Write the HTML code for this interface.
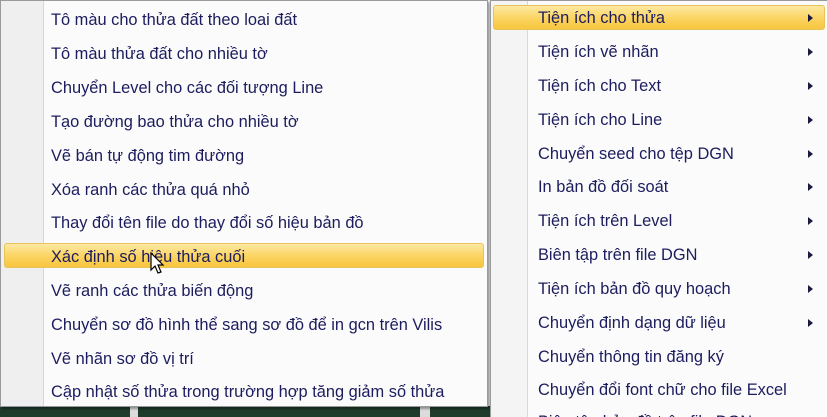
<!DOCTYPE html>
<html style="overflow:hidden;width:827px;height:417px"><head><meta charset="utf-8"><style>
*{margin:0;padding:0;box-sizing:border-box}
body{width:827px;height:417px;overflow:hidden;background:#f3f3f3;font-family:"Liberation Sans",sans-serif;position:relative}
.bg{position:absolute;left:0;top:406px;width:490px;height:11px;background:#1e3b2c}
.bg i{position:absolute;top:0;height:11px;background:#dcdcdc}
.menu{position:absolute;background:#fbfbfb;border:1px solid #9a9a9a;overflow:hidden}
.gut{position:absolute;top:0;bottom:0;background:#efefef;border-right:1px solid #d8d8d8}
.it{position:absolute;height:26px;line-height:26px;font-size:16.4px;color:#1c1c5e;white-space:nowrap}
.hl{position:absolute;height:25px;border:1px solid #e8c25a;border-radius:3px;background:linear-gradient(#fde9a4,#fbd35f 55%,#f8c63e)}
.arr{position:absolute;width:0;height:0;border-top:4px solid transparent;border-bottom:4px solid transparent;border-left:5px solid #1a1a40}
</style></head><body>
<div class="bg"><i style="left:130px;width:8px"></i><i style="left:420px;width:10px"></i></div>
<div class="menu" style="left:0;top:0;width:488px;height:407px;box-shadow:2px 2px 2px rgba(0,0,0,.35)">
<div class="gut" style="left:0;width:43px"></div>
<div class="hl" style="left:3px;top:242px;width:480px"></div>
<div class="it" style="left:50px;top:6px">Tô màu cho thửa đất theo loai đất</div>
<div class="it" style="left:50px;top:40px">Tô màu thửa đất cho nhiều tờ</div>
<div class="it" style="left:50px;top:74px">Chuyển Level cho các đối tượng Line</div>
<div class="it" style="left:50px;top:108px">Tạo đường bao thửa cho nhiều tờ</div>
<div class="it" style="left:50px;top:142px">Vẽ bán tự động tim đường</div>
<div class="it" style="left:50px;top:176px">Xóa ranh các thửa quá nhỏ</div>
<div class="it" style="left:50px;top:209px">Thay đổi tên file do thay đổi số hiệu bản đồ</div>
<div class="it" style="left:50px;top:243px">Xác định số hiệu thửa cuối</div>
<div class="it" style="left:50px;top:277px">Vẽ ranh các thửa biến động</div>
<div class="it" style="left:50px;top:311px">Chuyển sơ đồ hình thể sang sơ đồ để in gcn trên Vilis</div>
<div class="it" style="left:50px;top:345px">Vẽ nhãn sơ đồ vị trí</div>
<div class="it" style="left:50px;top:378px">Cập nhật số thửa trong trường hợp tăng giảm số thửa</div>
</div>
<svg style="position:absolute;left:150px;top:252px" width="16" height="24" viewBox="0 0 16 24"><path d="M1 1 L1 18 L5 14 L8 21 L11 20 L8 13 L13 13 Z" fill="#fff" stroke="#000" stroke-width="1.2"/></svg>
<div class="menu" style="left:490px;top:0;width:337px;height:417px;border-right:none;border-bottom:none">
<div class="gut" style="left:0;width:37px;background:#f4f4f4"></div>
<div class="hl" style="left:2px;top:4px;width:332px"></div>
<div class="it" style="left:47px;top:4px">Tiện ích cho thửa</div>
<div class="it" style="left:47px;top:38px">Tiện ích vẽ nhãn</div>
<div class="it" style="left:47px;top:72px">Tiện ích cho Text</div>
<div class="it" style="left:47px;top:106px">Tiện ích cho Line</div>
<div class="it" style="left:47px;top:140px">Chuyển seed cho tệp DGN</div>
<div class="it" style="left:47px;top:173px">In bản đồ đối soát</div>
<div class="it" style="left:47px;top:207px">Tiện ích trên Level</div>
<div class="it" style="left:47px;top:241px">Biên tập trên file DGN</div>
<div class="it" style="left:47px;top:275px">Tiện ích bản đồ quy hoạch</div>
<div class="it" style="left:47px;top:309px">Chuyển định dạng dữ liệu</div>
<div class="it" style="left:47px;top:343px">Chuyển thông tin đăng ký</div>
<div class="it" style="left:47px;top:376px">Chuyển đổi font chữ cho file Excel</div>
<div class="it" style="left:47px;top:408px">Biên tập bản đồ trên file DGN</div>
<div class="arr" style="left:317px;top:13px"></div>
<div class="arr" style="left:317px;top:47px"></div>
<div class="arr" style="left:317px;top:81px"></div>
<div class="arr" style="left:317px;top:115px"></div>
<div class="arr" style="left:317px;top:149px"></div>
<div class="arr" style="left:317px;top:182px"></div>
<div class="arr" style="left:317px;top:216px"></div>
<div class="arr" style="left:317px;top:250px"></div>
<div class="arr" style="left:317px;top:284px"></div>
<div class="arr" style="left:317px;top:318px"></div>
</div>
</body></html>
